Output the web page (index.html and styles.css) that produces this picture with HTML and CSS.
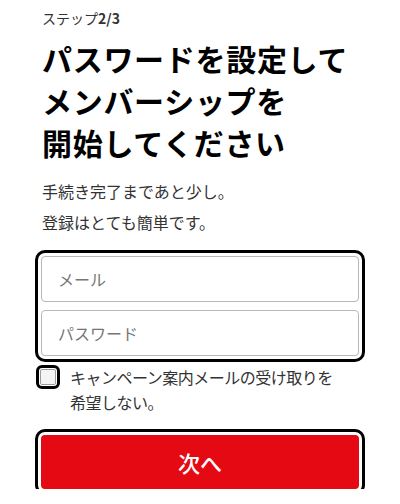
FILE: index.html
```html
<!DOCTYPE html>
<html lang="ja">
<head>
<meta charset="utf-8">
<title>パスワードを設定</title>
<link rel="stylesheet" href="styles.css">
</head>
<body>
<main class="page">
  <div class="step">ステップ<b>2/3</b></div>
  <h1 class="title">パスワードを設定して<br>メンバーシップを<br>開始してください</h1>
  <p class="lead first">手続き完了まであと少し。</p>
  <p class="lead">登録はとても簡単です。</p>
  <div class="fields">
    <div class="field"><span class="placeholder">メール</span></div>
    <div class="field"><span class="placeholder">パスワード</span></div>
  </div>
  <label class="opt">
    <span class="box"></span>
    <span class="opt-text">キャンペーン案内メールの受け取りを<br>希望しない。</span>
  </label>
  <button class="next" type="button">次へ</button>
</main>
</body>
</html>
```
FILE: styles.css
```css
html, body {
  margin: 0;
  padding: 0;
  background: #fff;
}
body {
  font-family: "Noto Sans CJK JP", "Noto Sans", sans-serif;
  color: #333;
}
.page {
  width: 318px;
  padding: 9px 41px 0 41px;
  display: flex;
  flex-direction: column;
}
.step {
  font-size: 14px;
  line-height: 18px;
  color: #333;
  padding-left: 1px;
}
.step b {
  font-weight: 700;
}
.title {
  margin: 10px 0 0 0;
  font-size: 30px;
  line-height: 42px;
  font-weight: 700;
  color: #000;
  letter-spacing: 0.7px;
  padding-left: 1px;
}
.lead {
  margin: 7px 0 0 0;
  font-size: 16px;
  line-height: 24px;
  color: #333;
  padding-left: 1px;
}
.lead.first {
  margin-top: 16px;
}
.fields {
  margin-top: 22px;
  display: flex;
  flex-direction: column;
  gap: 8px;
  outline: 3px solid #000;
  outline-offset: 3px;
  border-radius: 4px;
}
.field {
  height: 46px;
  box-sizing: border-box;
  border: 1px solid #b8b8b8;
  border-radius: 4px;
  display: flex;
  align-items: center;
  padding-left: 16px;
  background: #fff;
}
.placeholder {
  font-size: 16px;
  color: #767676;
}
.opt {
  margin-top: 9px;
  display: flex;
  align-items: flex-start;
  gap: 14px;
}
.box {
  flex: none;
  width: 16px;
  height: 16px;
  box-sizing: border-box;
  margin: 4px 0 0 -1px;
  border: 1px solid #9a9a9a;
  border-radius: 2px;
  background: #f4f4f4;
  outline: 3px solid #000;
  outline-offset: 1px;
}
.opt-text {
  font-size: 16px;
  line-height: 25px;
  color: #333;
  letter-spacing: -0.5px;
}
.next {
  margin-top: 20px;
  height: 54px;
  border: none;
  border-radius: 4px;
  background: #e50914;
  color: #fff;
  font-family: "Noto Sans CJK JP", "Noto Sans", sans-serif;
  font-size: 22px;
  font-weight: 500;
  outline: 3px solid #000;
  outline-offset: 3px;
  padding: 0;
}
```
